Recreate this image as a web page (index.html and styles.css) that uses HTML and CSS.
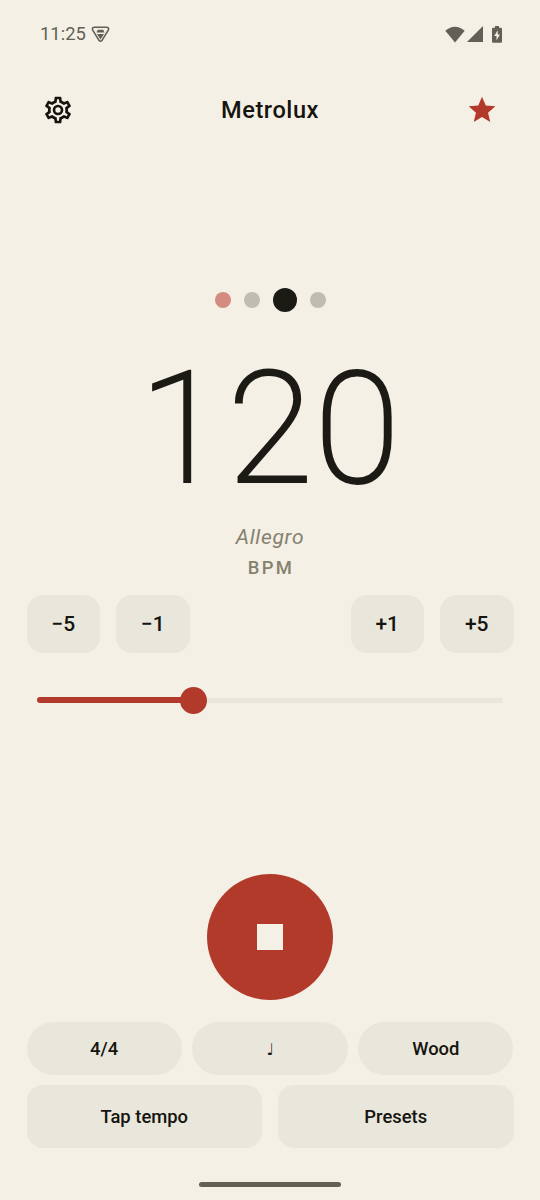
FILE: index.html
```html
<!DOCTYPE html>
<html lang="en">
<head>
<meta charset="utf-8">
<title>Metrolux</title>
<link rel="stylesheet" href="styles.css">
</head>
<body>
<div class="screen">
  <div class="status">
    <span class="clock">11:25</span>
    <svg class="vpn" width="19" height="17" viewBox="0 0 19 17" fill="none" stroke="#625f56" stroke-linejoin="round"><path d="M3.2 1.2H15.8Q18.4 1.700 17.300 4.200L11 14.400Q9.500 16 8 14.400L1.700 4.200Q.600 1.700 3.200 1.200Z" stroke-width="1.600"/><path d="M6.800 3.800H12.200L13.600 6.600H5.400ZM6 8H13L9.500 13.500Z" fill="#625f56" stroke="none"/></svg>
    <span class="grow"></span>
    <svg class="wifi" width="20" height="17" viewBox="0 0 20 17" fill="#625f56"><path d="M0.300 4.700Q10-3.300 19.700 4.700L10 16.500Z"/></svg>
    <svg class="signal" width="16" height="16" viewBox="0 0 16 16" fill="#625f56"><path d="M16 0V16H0Z"/></svg>
    <svg class="battery" width="10" height="17" viewBox="0 0 10 17"><path d="M3 0H7V1.700H8.800Q10 1.700 10 2.900V15.600Q10 16.800 8.800 16.800H1.200Q0 16.800 0 15.600V2.900Q0 1.700 1.200 1.700H3Z" fill="#625f56"/><path d="M5.700 4.200 2.200 10H4.500V14.300L8 8.400H5.700Z" fill="#f5f0e6"/></svg>
  </div>
  <header class="bar">
    <svg class="gear" width="32" height="32" viewBox="0 0 24 24" fill="#15140f"><path d="M19.430 12.980c.040-.320.070-.640.070-.980s-.030-.660-.070-.980l2.110-1.650c.190-.150.240-.420.120-.640l-2-3.460a.5.500 0 0 0-.610-.220l-2.490 1a7.300 7.300 0 0 0-1.690-.980l-.380-2.650A.488.488 0 0 0 14 2h-4c-.250 0-.460.180-.490.420l-.380 2.650c-.610.250-1.170.590-1.690.980l-2.490-1a.5.500 0 0 0-.610.220l-2 3.460c-.130.220-.070.490.120.640l2.110 1.650c-.040.320-.070.650-.070.980s.030.660.070.980l-2.110 1.650c-.190.150-.240.420-.120.640l2 3.460c.120.220.390.300.610.220l2.490-1c.520.400 1.080.730 1.690.980l.380 2.650c.030.240.240.420.490.420h4c.250 0 .460-.180.490-.420l.380-2.650c.610-.250 1.170-.590 1.690-.980l2.490 1c.230.090.490 0 .610-.220l2-3.460c.120-.220.070-.490-.120-.640zm-1.980-1.710c.040.310.050.520.050.730s-.020.430-.050.730l-.140 1.130.890.700 1.080.840-.700 1.210-1.270-.510-1.040-.420-.900.680c-.430.320-.840.560-1.250.730l-1.060.430-.160 1.130-.200 1.350h-1.400l-.190-1.350-.160-1.130-1.060-.430c-.430-.180-.830-.410-1.230-.710l-.910-.700-1.060.430-1.270.510-.700-1.210 1.080-.840.890-.700-.140-1.130c-.030-.310-.050-.540-.050-.740s.020-.430.050-.730l.140-1.130-.890-.700-1.080-.840.700-1.210 1.270.510 1.040.420.900-.680c.430-.320.840-.560 1.250-.730l1.060-.430.160-1.130.200-1.350h1.390l.190 1.350.160 1.130 1.060.430c.430.180.830.410 1.230.710l.910.700 1.060-.430 1.270-.510.700 1.210-1.070.850-.890.700zM12 8a4 4 0 1 0 0 8 4 4 0 0 0 0-8m0 6a2 2 0 1 1 0-4 2 2 0 0 1 0 4"/></svg>
    <h1 class="title">Metrolux</h1>
    <svg class="star" width="32" height="32" viewBox="0 0 24 24" fill="#b23a2a"><path d="M12 17.270 18.180 21l-1.640-7.030L22 9.240l-7.190-.610L12 2 9.190 8.630 2 9.240l5.460 4.730L5.820 21z"/></svg>
  </header>
  <main class="tempo">
    <div class="beats"><i class="beat accent"></i><i class="beat"></i><i class="beat active"></i><i class="beat"></i></div>
    <div class="number"><span class="lead">1</span>20</div>
    <div class="marking">Allegro</div>
    <div class="unit">BPM</div>
  </main>
  <div class="steps">
    <button class="step">−5</button><button class="step">−1</button><span class="grow"></span><button class="step">+1</button><button class="step">+5</button>
  </div>
  <div class="slider"><span class="filled"></span><span class="thumb"></span><span class="rest"></span></div>
  <button class="stop" aria-label="Stop"><span class="square"></span></button>
  <div class="chips"><button class="chip">4/4</button><button class="chip"><span class="note">♩</span></button><button class="chip">Wood</button></div>
  <div class="actions"><button class="action">Tap tempo</button><button class="action">Presets</button></div>
  <div class="home"></div>
</div>
</body>
</html>
```
FILE: styles.css
```css
* { box-sizing: border-box; }
body { margin: 0; background: #f5f0e6; color: #15140f; font-family: Roboto, sans-serif; }
button { border: 0; padding: 0; background: #e9e6db; color: inherit; font-family: inherit; font-weight: 500; }
svg { display: block; flex: none; }
.screen { height: 1200px; display: flex; flex-direction: column; overflow: hidden; }
.grow { flex: 1; }

.status { height: 68px; padding: 0 38px 0 40px; display: flex; align-items: center; }
.clock { font-size: 18.4px; line-height: 22px; color: #625f56; }
.vpn { margin-left: 5px; margin-top: 1px; }
.wifi { margin-right: 1px; }
.signal { margin-left: 1px; }
.battery { margin-left: 9px; }

.bar { height: 84px; padding: 0 42px; display: flex; align-items: center; justify-content: space-between; }
.title { margin: 0; font-size: 23.6px; line-height: 32px; font-weight: 500; letter-spacing: .55px; }

.tempo { height: 443px; padding-top: 135px; display: flex; flex-direction: column; align-items: center; }
.beats { height: 26px; display: flex; align-items: center; gap: 13px; }
.beat { width: 16px; height: 16px; border-radius: 50%; background: #bfbdb1; }
.accent { background: #d48c80; }
.active { width: 24px; height: 24px; background: #1c1a15; }
.number { margin-top: 21px; height: 189px; font-size: 156px; line-height: 190px; font-weight: 200; color: #1c1a15; -webkit-text-stroke: 1.8px #1c1a15; letter-spacing: 1px; }
.lead { letter-spacing: 2.5px; }
.marking { margin-top: -1px; font-size: 21px; line-height: 30px; font-style: italic; color: #85816f; letter-spacing: .66px; }
.unit { margin-top: 4px; font-size: 18.4px; line-height: 24px; font-weight: 500; color: #85816f; letter-spacing: 2.3px; padding-left: 2px; }

.steps { display: flex; gap: 16px; padding: 0 26.500px; }
.steps .grow { margin: 0 -16px; }
.step { width: 73.500px; height: 57.500px; border-radius: 16px; font-size: 21px; }

.slider { margin-top: 34px; padding: 0 37px; height: 27px; display: flex; align-items: center; }
.filled { width: 145px; height: 5.300px; background: #b23a2a; border-radius: 3px 0 0 3px; }
.thumb { width: 27px; height: 27px; margin-left: -2px; background: #b23a2a; border-radius: 50%; }
.rest { flex: 1; height: 5px; background: #e9e6db; border-radius: 0 3px 3px 0; }

.stop { width: 126px; height: 126px; margin: 160.5px auto 0; border-radius: 50%; background: #b23a2a; display: flex; align-items: center; justify-content: center; }
.square { width: 26.500px; height: 26.500px; background: #f5f0e6; }

.chips { margin-top: 22px; padding: 0 26.500px; display: flex; gap: 10.500px; }
.chip { flex: 1; height: 52.500px; border-radius: 27px; font-size: 18.400px; }
.note { font-family: "DejaVu Sans", sans-serif; font-size: 16px; line-height: 16px; font-weight: 400; }
.actions { margin-top: 10.500px; padding: 0 26.500px; display: flex; gap: 16px; }
.action { flex: 1; height: 62.500px; border-radius: 16px; font-size: 18.400px; }
.home { width: 142px; height: 5px; margin: 34px auto 0; border-radius: 3px; background: #625f56; }
```
